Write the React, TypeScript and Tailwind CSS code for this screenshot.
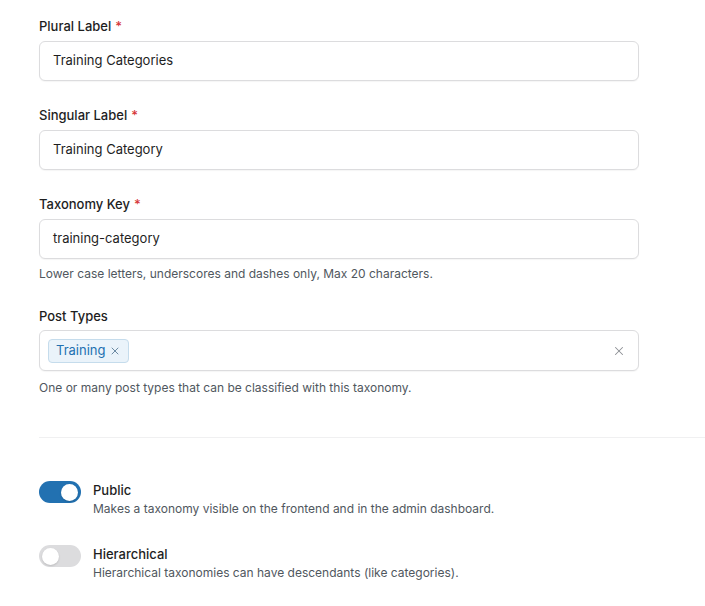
import { X } from "lucide-react";

function Field({
  label,
  required,
  value,
  help,
}: {
  label: string;
  required?: boolean;
  value: string;
  help?: string;
}) {
  return (
    <div className="mb-[25px]">
      <label className="mb-[6px] block text-[13px] font-medium leading-[18px] text-[#1e1e1e]">
        {label}
        {required ? <span className="ml-1 text-[#d63638]">*</span> : null}
      </label>
      <div className="flex h-[40px] w-[600px] items-center rounded-[6px] border border-[#dcdcde] bg-white px-[13px] text-[13px] text-[#1e1e1e] shadow-[0_1px_1px_rgba(0,0,0,0.04)]">
        {value}
      </div>
      {help ? <p className="mt-[7px] text-[12px] leading-[16px] text-[#50575e]">{help}</p> : null}
    </div>
  );
}

function Toggle({ on, title, desc }: { on: boolean; title: string; desc: string }) {
  return (
    <div className="flex items-start gap-[12px]">
      <div
        className={`flex h-[22px] w-[42px] shrink-0 items-center rounded-full px-[3px] ${
          on ? "justify-end bg-[#2271b1]" : "justify-start bg-[#dcdcde]"
        }`}
      >
        <span className="h-[17px] w-[17px] rounded-full bg-white shadow-[0_1px_2px_rgba(0,0,0,0.15)]" />
      </div>
      <div>
        <div className="text-[13px] font-medium leading-[18px] text-[#1e1e1e]">{title}</div>
        <div className="mt-[1px] text-[12px] leading-[18px] text-[#50575e]">{desc}</div>
      </div>
    </div>
  );
}

export default function App() {
  return (
    <div
      className="min-h-[606px] w-[705px] bg-white pl-[39px] pt-[17px]"
      style={{ fontFamily: "Inter, 'Noto Sans', sans-serif" }}
    >
      <Field label="Plural Label" required value="Training Categories" />
      <Field label="Singular Label" required value="Training Category" />
      <Field
        label="Taxonomy Key"
        required
        value="training-category"
        help="Lower case letters, underscores and dashes only, Max 20 characters."
      />

      <div className="mt-[2px]">
        <label className="mb-[5px] block text-[13px] font-medium leading-[18px] text-[#1e1e1e]">
          Post Types
        </label>
        <div className="flex h-[41px] w-[600px] items-center justify-between rounded-[6px] border border-[#dcdcde] bg-white pl-[8px] pr-[12px] shadow-[0_1px_1px_rgba(0,0,0,0.04)]">
          <span className="inline-flex h-[24px] items-center gap-[4px] rounded-[4px] border border-[#c5dcec] bg-[#eaf3fa] px-[7px] text-[13px] text-[#2271b1]">
            Training
            <X className="h-[12px] w-[12px] text-[#6b8aa3]" strokeWidth={2} />
          </span>
          <X className="h-[14px] w-[14px] text-[#8c8f94]" strokeWidth={1.75} />
        </div>
        <p className="mt-[9px] text-[12px] leading-[16px] text-[#50575e]">
          One or many post types that can be classified with this taxonomy.
        </p>
      </div>

      <div className="mt-[41px] h-px bg-[#f0f0f1]" />

      <div className="mt-[43px] flex flex-col gap-[27px]">
        <Toggle on title="Public" desc="Makes a taxonomy visible on the frontend and in the admin dashboard." />
        <Toggle
          on={false}
          title="Hierarchical"
          desc="Hierarchical taxonomies can have descendants (like categories)."
        />
      </div>
    </div>
  );
}
